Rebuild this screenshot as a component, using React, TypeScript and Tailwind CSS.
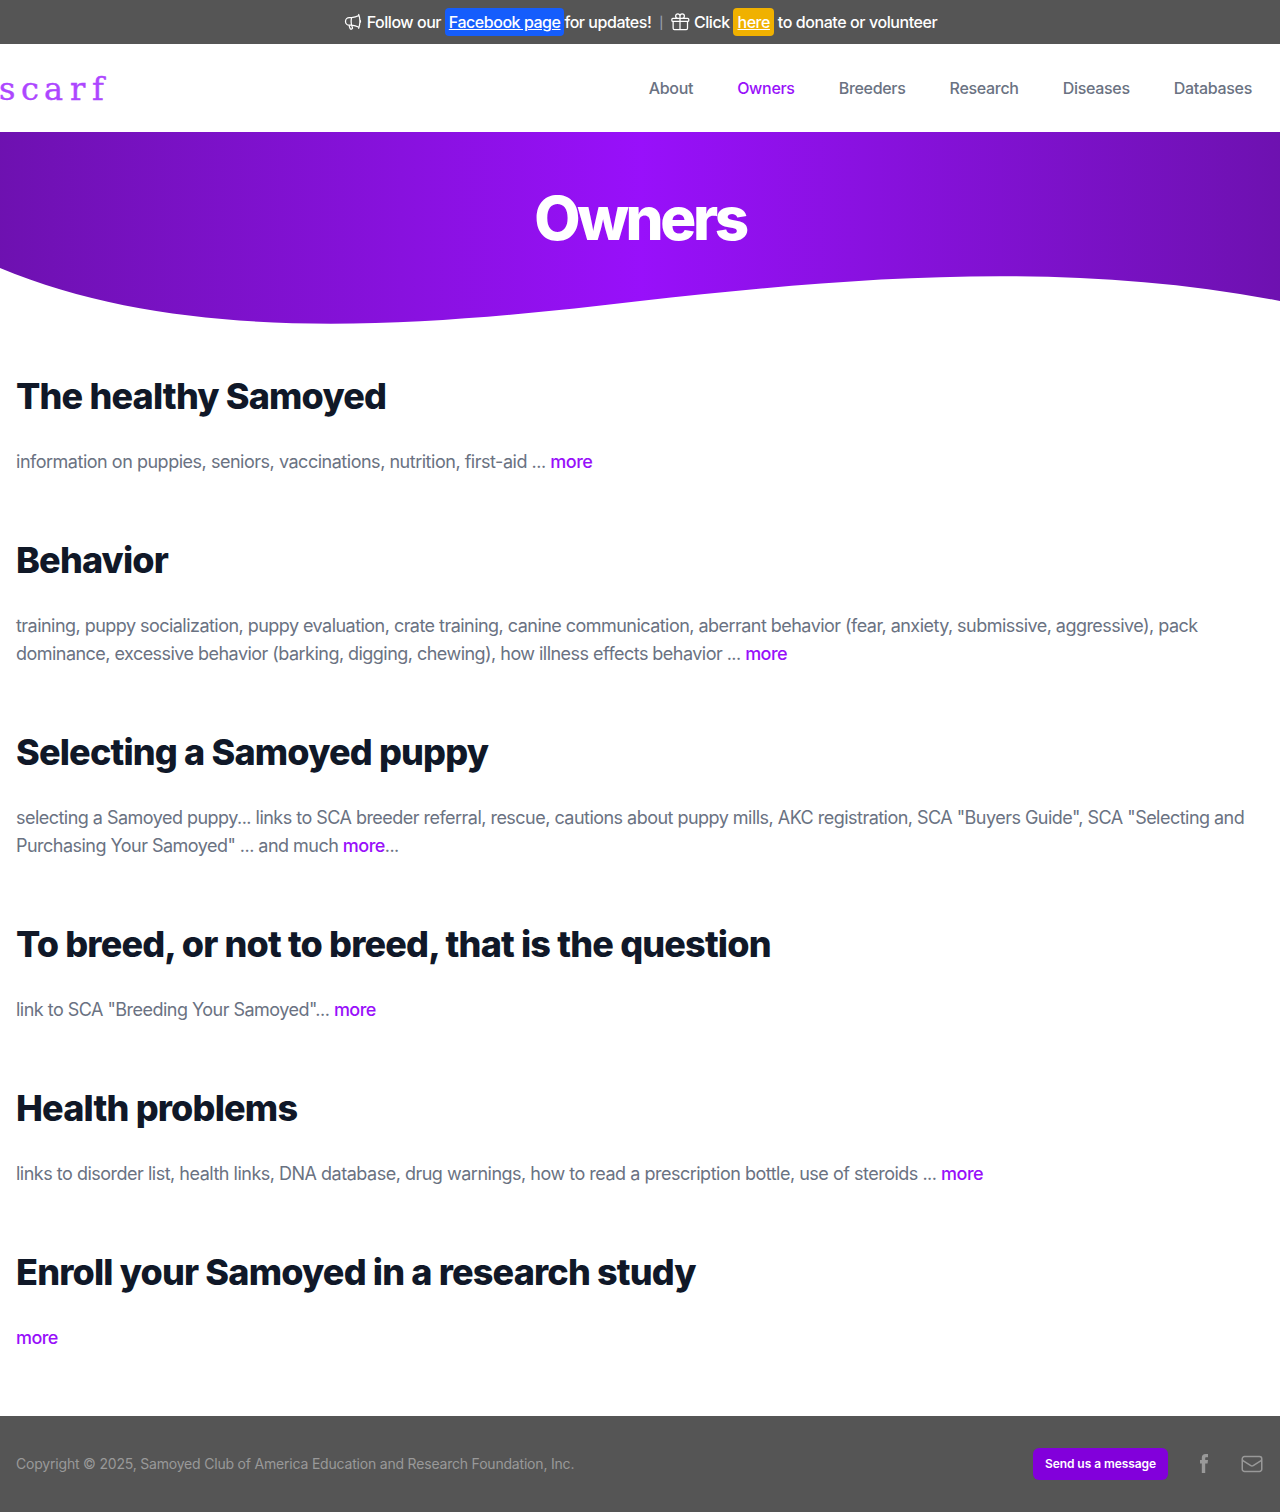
import React from "react";
import { HiOutlineMegaphone, HiOutlineGift, HiOutlineEnvelope } from "react-icons/hi2";

const nav = ["About", "Owners", "Breeders", "Research", "Diseases", "Databases"];

function More() {
  return <a href="#" className="font-medium text-purple-600">more</a>;
}

const sections: { title: string; tracking: string; body: React.ReactNode }[] = [
  { title: "The healthy Samoyed", tracking: "tracking-[-0.0266em]", body: <>information on puppies, seniors, vaccinations, nutrition, first-aid ... <More /></> },
  { title: "Behavior", tracking: "tracking-[-0.0298em]", body: <>training, puppy socialization, puppy evaluation, crate training, canine communication, aberrant behavior (fear, anxiety, submissive, aggressive), pack dominance, excessive behavior (barking, digging, chewing), how illness effects behavior ... <More /></> },
  { title: "Selecting a Samoyed puppy", tracking: "tracking-[-0.0292em]", body: <>selecting a Samoyed puppy... links to SCA breeder referral, rescue, cautions about puppy mills, AKC registration, SCA "Buyers Guide", SCA "Selecting and Purchasing Your Samoyed" ... and much <More />...</> },
  { title: "To breed, or not to breed, that is the question", tracking: "tracking-[-0.029em]", body: <>link to SCA "Breeding Your Samoyed"... <More /></> },
  { title: "Health problems", tracking: "tracking-[-0.0275em]", body: <>links to disorder list, health links, DNA database, drug warnings, how to read a prescription bottle, use of steroids ... <More /></> },
  { title: "Enroll your Samoyed in a research study", tracking: "tracking-[-0.0305em]", body: <More /> },
];

export default function App() {
  return (
    <div className="bg-white font-['Inter',sans-serif] text-gray-500">
      <div className="flex h-11 items-center justify-center bg-[#555] text-base font-medium tracking-[-0.029em] text-white">
        <HiOutlineMegaphone className="mr-1 size-5" />
        <span className="whitespace-pre">Follow our </span>
        <a href="#" className="rounded bg-[#155dfc] px-1 py-0.5 leading-6 underline">Facebook page</a>
        <span>for updates!</span>
        <span className="mr-[7px] ml-2 pt-0.5 text-xs text-gray-400">|</span>
        <HiOutlineGift className="mr-1 size-5" />
        <span className="whitespace-pre">Click </span>
        <a href="#" className="rounded bg-[#f0b100] px-1 py-0.5 leading-6 underline">here</a>
        <span className="tracking-[-0.026em] whitespace-pre"> to donate or volunteer</span>
      </div>
      <header className="flex h-[88px] items-center justify-between pr-7">
        <a href="#" className="flex pt-0.5 font-['DejaVu_Serif',serif] text-[32px] leading-none text-purple-500 [-webkit-text-stroke:0.4px_#ad46ff]">
          <span className="-ml-px w-[22px]">s</span>
          <span className="w-[23px]">c</span>
          <span className="w-[26px]">a</span>
          <span className="w-[22px]">r</span>
          <span>f</span>
        </a>
        <nav className="flex gap-11 text-base font-medium tracking-[-0.019em]">
          {nav.map((n) => (
            <a key={n} href="#" className={n === "Owners" ? "text-purple-600" : ""}>{n}</a>
          ))}
        </nav>
      </header>
      <div className="relative h-[212px] bg-linear-to-r from-purple-800 via-purple-600 to-purple-800 pt-14">
        <h1 className="relative text-center text-6xl leading-[61px] font-extrabold tracking-[-0.057em] text-white">Owners</h1>
        <svg className="absolute inset-x-0 bottom-0 h-[85px] w-full fill-white" viewBox="0 259 1280 85" preserveAspectRatio="none">
          <path d="M0 268C190 347 427 326 640 301C853 277 1067 260 1280 301V345H0Z" />
        </svg>
      </div>
      <main className="flex flex-col gap-16 px-4 pt-8 pb-16">
        {sections.map((s) => (
          <section key={s.title}>
            <h2 className="text-4xl leading-10 font-extrabold tracking-[-0.023em] text-gray-900">{s.title}</h2>
            <p className={`mt-8 text-lg leading-7 ${s.tracking}`}>{s.body}</p>
          </section>
        ))}
      </main>
      <footer className="flex h-24 items-center justify-between bg-[#555] px-4">
        <p className="text-sm tracking-[-0.014em] text-[#999]">Copyright © 2025, Samoyed Club of America Education and Research Foundation, Inc.</p>
        <div className="flex items-center">
          <a href="#" className="flex h-8 w-[135px] items-center justify-center rounded-md bg-[#8200db] text-xs font-semibold tracking-[-0.005em] text-white">Send us a message</a>
          <svg className="ml-6 size-6 fill-[#999]" viewBox="0 0 24 24">
            <path d="M9.8 21V11.5H8V8h1.8V6c0-2.6 1.3-4 3.9-4H16v3.3h-1.6c-1 0-1.2.4-1.2 1.3V8H16l-.4 3.5h-2.4V21z" />
          </svg>
          <HiOutlineEnvelope className="ml-6 size-6 text-[#999]" />
        </div>
      </footer>
    </div>
  );
}
